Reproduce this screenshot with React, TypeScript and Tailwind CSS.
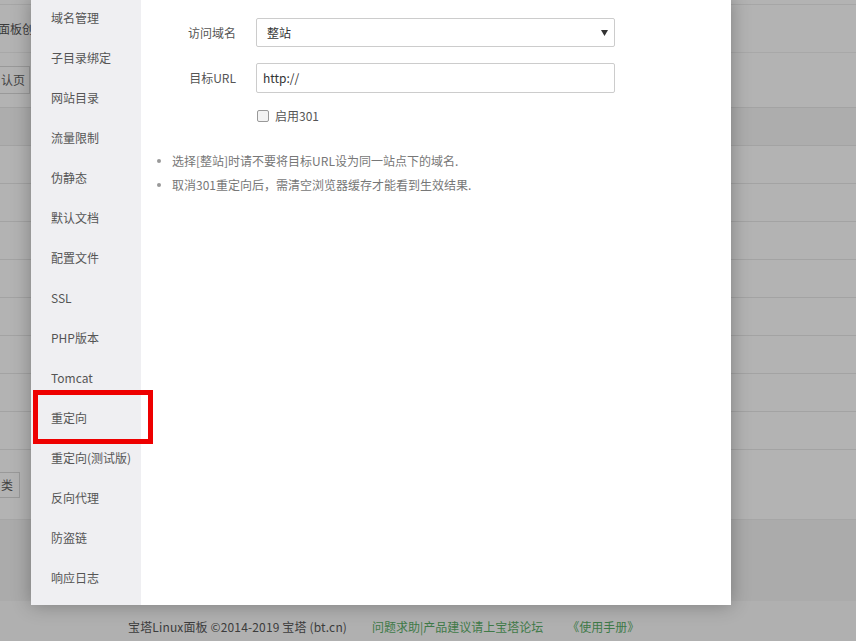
import React from 'react';

const menu = [
  '域名管理',
  '子目录绑定',
  '网站目录',
  '流量限制',
  '伪静态',
  '默认文档',
  '配置文件',
  'SSL',
  'PHP版本',
  'Tomcat',
  '重定向',
  '重定向(测试版)',
  '反向代理',
  '防盗链',
  '响应日志',
];

const font = { fontFamily: '"Noto Sans CJK SC", "Liberation Sans", sans-serif' };

const PageBehind = () => (
  <div className="flex flex-col w-full h-full bg-[#b3b3b3]">
    <div className="h-[5px] border-b border-[#a6a6a6]" />
    <div className="h-[48px] flex items-center pl-0 text-[12px] text-[#3a3a3a] border-b border-[#a8a8a8]">
      <span className="-ml-[2px]">面板创建</span>
    </div>
    <div className="h-[55px] flex items-center border-b border-[#a3a3a3]">
      <div className="h-[28px] w-[120px] -ml-[90px] border border-[#999] flex items-center pl-[90px] text-[12px] text-[#444]">
        认页
      </div>
    </div>
    <div className="h-[38px] border-b border-[#a3a3a3] bg-[#adadad]" />
    {Array.from({ length: 8 }).map((_, i) => (
      <div key={i} className="h-[38px] border-b border-[#a3a3a3]" />
    ))}
    <div className="h-[70px] flex items-center border-b border-[#a6a6a6]">
      <div className="h-[26px] w-[80px] -ml-[60px] border border-[#999] flex items-center pl-[60px] text-[12px] text-[#444]">
        类
      </div>
    </div>
    <div className="h-[81px] bg-[#ababab]" />
    <div className="flex-1 bg-[#b0b0b0] flex items-center text-[12px] pl-[128px] pt-[12px]">
      <span className="text-[#3c3c3c] tracking-[0.15px]">宝塔Linux面板 ©2014-2019 宝塔 (bt.cn)</span>
      <span className="ml-[25px] text-[#3f7a48]">问题求助|产品建议请上宝塔论坛</span>
      <span className="ml-[24px] text-[#3f7a48]">《使用手册》</span>
    </div>
  </div>
);

const Modal = () => (
  <div className="absolute left-[31px] top-[-2px] w-[700px] h-[607px] bg-white flex shadow-[0_0_18px_rgba(0,0,0,0.3)]">
    <div className="w-[110px] bg-[#efeff2] flex flex-col">
      {menu.map((m) => (
        <div key={m} className="h-[40px] flex items-center pl-[20px] text-[12px] text-[#555]">
          {m}
        </div>
      ))}
    </div>
    <div className="flex-1 flex flex-col pt-[20px] text-[12px] text-[#555]">
      <div className="flex items-center">
        <div className="w-[95px] text-right">访问域名</div>
        <div className="ml-[20px] w-[359px] h-[29px] border border-[#ccc] rounded-[2px] flex items-center justify-between pl-[10px] pr-[6px] text-[#333]">
          <span>整站</span>
          <svg width="7" height="6" viewBox="0 0 7 6">
            <path d="M0 0 H7 L3.5 6 Z" fill="#333" />
          </svg>
        </div>
      </div>
      <div className="flex items-center mt-[16px]">
        <div className="w-[95px] text-right">目标URL</div>
        <div className="ml-[20px] w-[359px] h-[30px] border border-[#ccc] rounded-[2px] flex items-center px-[6px] text-[#333]">
          http://
        </div>
      </div>
      <div className="flex items-center mt-[14px] ml-[116px]">
        <div className="w-[12px] h-[12px] border border-[#999] rounded-[2px] bg-[#f3f3f3]" />
        <span className="ml-[6px]">启用301</span>
      </div>
      <ul className="mt-[27px] ml-[16px] flex flex-col gap-[6px] text-[#777]">
        <li className="flex items-center">
          <span className="w-[4px] h-[4px] rounded-full bg-[#999] mr-[11px]" />
          选择[整站]时请不要将目标URL设为同一站点下的域名.
        </li>
        <li className="flex items-center">
          <span className="w-[4px] h-[4px] rounded-full bg-[#999] mr-[11px]" />
          取消301重定向后，需清空浏览器缓存才能看到生效结果.
        </li>
      </ul>
    </div>
    <div className="absolute left-[2px] top-[392px] w-[120px] h-[54px] border-[5px] border-[#ee0000]" />
  </div>
);

export default function App() {
  return (
    <div className="relative w-[856px] h-[641px] overflow-hidden" style={font}>
      <PageBehind />
      <Modal />
    </div>
  );
}
